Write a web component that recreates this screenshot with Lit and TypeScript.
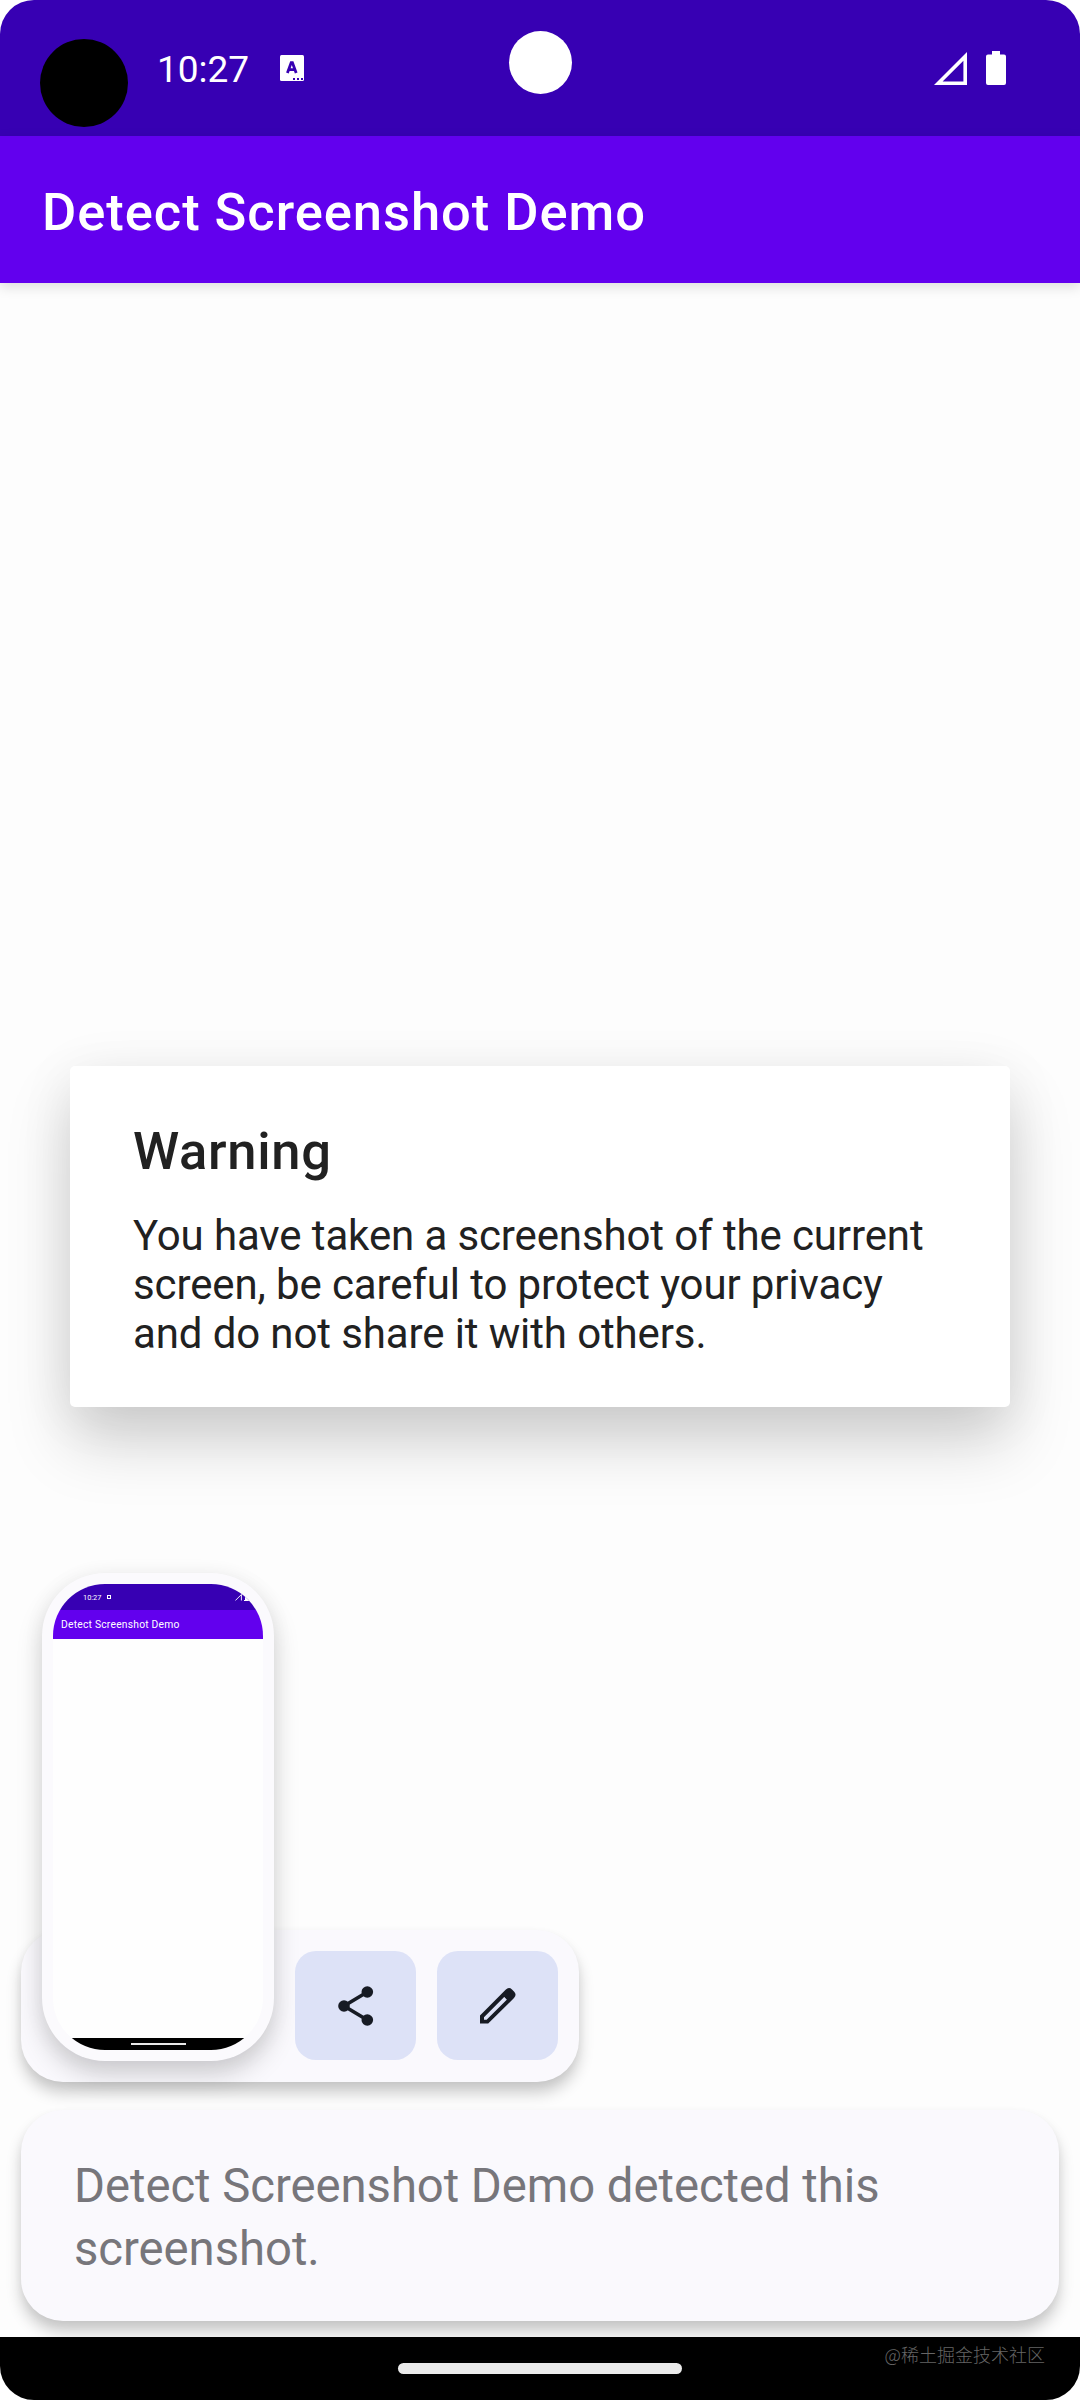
import { LitElement, html, css, svg } from "lit";
import { customElement } from "lit/decorators.js";

const signalIcon = svg`<path fill-rule="evenodd" d="M0 33 L33 0 V33 Z M8.6 29.6 H29.4 V8.8 Z"/>`;

@customElement("status-icons")
class StatusIcons extends LitElement {
  static styles = css`
    :host { display: block; height: 34px; }
    .icons { display: flex; gap: 19px; }
    svg { display: block; fill: #fff; }
  `;
  render() {
    return html`<div class="icons">
      <svg width="33" height="34" viewBox="0 -1 33 34">${signalIcon}</svg>
      <svg width="20" height="34" viewBox="0 0 20 34">
        <path d="M6 0 H14 V3.4 H18 Q20 3.4 20 5.4 V32 Q20 34 18 34 H2 Q0 34 0 32 V5.4 Q0 3.4 2 3.4 H6 Z" />
      </svg>
    </div>`;
  }
}

@customElement("screen-thumbnail")
class ScreenThumbnail extends LitElement {
  static styles = css`
    :host { display: block; }
    .frame {
      box-sizing: border-box; width: 232px; height: 488px; padding: 11px;
      border-radius: 63px; background: #fbfafd;
      box-shadow: 0 14px 26px rgba(0, 0, 0, 0.17), 0 2px 22px rgba(0, 0, 0, 0.05);
    }
    .shot {
      display: flex; flex-direction: column; height: 466px; overflow: hidden;
      border-radius: 52px; background: #fefefe;
    }
    .status {
      display: flex; justify-content: space-between; align-items: center; box-sizing: border-box;
      height: 26px; padding: 0 10px 0 30px; background: #3700b3; color: #fff;
      font-size: 7.4px;
    }
    .left { display: flex; gap: 6px; align-items: center; }
    .mark { width: 2px; height: 2px; border: 1px solid #fff; }
    svg { display: block; fill: #fff; }
    .bar {
      box-sizing: border-box; height: 29px; padding-left: 8px; background: #6200ee; color: #fff;
      font-size: 10.3px; line-height: 30px; font-weight: 400; letter-spacing: 0.22px; white-space: nowrap;
    }
    .nav { display: flex; align-items: center; justify-content: center; height: 12px; margin-top: auto; background: #000; }
    .pill { width: 55px; height: 2px; background: #e8e8e8; }
  `;
  render() {
    return html`<div class="frame">
      <div class="shot">
        <div class="status">
          <div class="left"><span>10:27</span><span class="mark"></span></div>
          <svg width="18" height="7" viewBox="0 0 18 7">
            <path d="M0.4 6.5 L6.4 0.5 V6.5" fill="none" stroke="#fff" stroke-width="0.9" />
            <path d="M9 6 H18 V7 H9 Z M11 0 H14 V7 H10 V1 H11 Z" />
          </svg>
        </div>
        <div class="bar">Detect Screenshot Demo</div>
        <div class="nav"><div class="pill"></div></div>
      </div>
    </div>`;
  }
}

@customElement("app-root")
class AppRoot extends LitElement {
  static styles = css`
    :host { display: block; font-family: Roboto, "Noto Sans CJK SC", sans-serif; background: #fff; }
    .screen {
      position: relative; display: flex; flex-direction: column; width: 1080px; height: 2400px;
      overflow: hidden; border-radius: 34px; background: #fdfdfd;
    }
    .status {
      display: flex; align-items: flex-start; box-sizing: border-box; height: 136px;
      padding: 39px 74px 0 40px; background: #3700b3; color: #fff;
    }
    .dot { width: 88px; height: 88px; border-radius: 50%; background: #000; }
    .time { margin: 9px 0 0 29px; font-size: 37px; line-height: 43px; }
    .keyboard { display: block; margin: 16px 0 0 31px; }
    .right { margin: 12px 0 0 auto; }
    .camera { position: absolute; left: 509px; top: 31px; width: 63px; height: 63px; border-radius: 50%; background: #fff; }
    .appbar {
      display: flex; align-items: center; box-sizing: border-box; height: 147px; padding: 4px 42px 0;
      background: #6200ee; box-shadow: 0 4px 12px rgba(0, 0, 0, 0.13);
      color: #fff; font-size: 52.5px; font-weight: 500; letter-spacing: 0.95px; white-space: nowrap;
    }
    .content { display: flex; flex: 1; flex-direction: column; justify-content: flex-end; padding: 0 21px 16px; min-height: 0; }
    .dialog {
      position: absolute; left: 70px; top: 1066px; box-sizing: border-box; width: 940px; height: 341px;
      padding: 54px 63px 0; border-radius: 5px; background: #fff; color: #212121;
      box-shadow: 0 36px 64px rgba(0, 0, 0, 0.17), 0 8px 56px rgba(0, 0, 0, 0.07);
    }
    .heading { font-size: 52.5px; line-height: 62px; font-weight: 500; letter-spacing: 0.7px; }
    .text { margin-top: 29px; font-size: 42px; line-height: 49px; letter-spacing: -0.12px; white-space: nowrap; }
    .actions {
      display: flex; align-items: flex-end; gap: 21px; box-sizing: border-box; width: 558px; height: 152px;
      padding: 21px; border-radius: 42px; background: #faf9fd;
      box-shadow: 0 11px 15px rgba(0, 0, 0, 0.2), 0 3px 8px rgba(0, 0, 0, 0.04);
    }
    .action {
      display: flex; align-items: center; justify-content: center; width: 121px; height: 109px;
      margin-bottom: 1px; border-radius: 21px; background: #dde2f7; fill: #171b24;
    }
    .message {
      box-sizing: border-box; height: 211px; margin-top: 28px; padding: 45px 53px; border-radius: 42px;
      background: #faf9fd; box-shadow: 0 11px 15px rgba(0, 0, 0, 0.2), 0 3px 8px rgba(0, 0, 0, 0.04);
      color: #77767b; font-size: 47.25px; line-height: 63px; letter-spacing: -0.04px; white-space: nowrap;
    }
    .nav { position: relative; display: flex; justify-content: center; height: 63px; background: #000; }
    .pill { width: 284px; height: 11px; margin-top: 26px; border-radius: 6px; background: #ebebeb; }
    .credit {
      position: absolute; right: 35px; top: 4px; color: #666; font-size: 18px; line-height: 26px;
      font-family: "Noto Sans CJK SC", sans-serif; font-weight: 300; white-space: nowrap;
    }
  `;
  render() {
    return html`<main class="screen">
      <header class="status">
        <div class="dot"></div>
        <div class="time">10:27</div>
        <svg class="keyboard" width="24" height="26" viewBox="0 0 24 26">
          <rect width="24" height="26" rx="1.5" fill="#fff" />
          <path d="M7.4 18 L11.2 7.6 H12.4 L16.2 18 M9 14.6 H14.6" fill="none" stroke="#3700b3" stroke-width="2.8" />
          <path d="M13 23 h2 v2 h-2z M17 23 h2 v2 h-2z M21 23 h2 v2 h-2z" fill="#3700b3" />
        </svg>
        <status-icons class="right"></status-icons>
      </header>
      <div class="camera"></div>
      <div class="appbar">Detect Screenshot Demo</div>
      <section class="content">
        <div class="actions">
          <screen-thumbnail></screen-thumbnail>
          <div class="action">
            <svg width="36" height="40" viewBox="0 0 36 40">
              <path d="M29.3 6 L6 20 L29.3 34" fill="none" stroke="#171b24" stroke-width="3.6" />
              <circle cx="29.3" cy="6" r="5.8" /><circle cx="6" cy="20" r="5.8" /><circle cx="29.3" cy="34" r="5.8" />
            </svg>
          </div>
          <div class="action">
            <svg width="36" height="36" viewBox="0 0 36 36">
              <path fill-rule="evenodd" d="M0 27.4 L25.6 1.7 Q28.8 -1.5 32 1.4 L34.2 3.7 Q37 6.9 34 9.9 L8.2 35.6 H0 Z M4 29.2 V31.8 H6.6 L27 11.4 L24.4 8.8 Z" />
              <path d="M23.5 8 L28.8 3 L33.4 7.4 L27.8 12.6 Z" />
            </svg>
          </div>
        </div>
        <div class="message">Detect Screenshot Demo detected this<br />screenshot.</div>
      </section>
      <div class="dialog">
        <div class="heading">Warning</div>
        <div class="text">You have taken a screenshot of the current<br />screen, be careful to protect your privacy<br />and do not share it with others.</div>
      </div>
      <footer class="nav">
        <div class="pill"></div>
        <div class="credit">@稀土掘金技术社区</div>
      </footer>
    </main>`;
  }
}
